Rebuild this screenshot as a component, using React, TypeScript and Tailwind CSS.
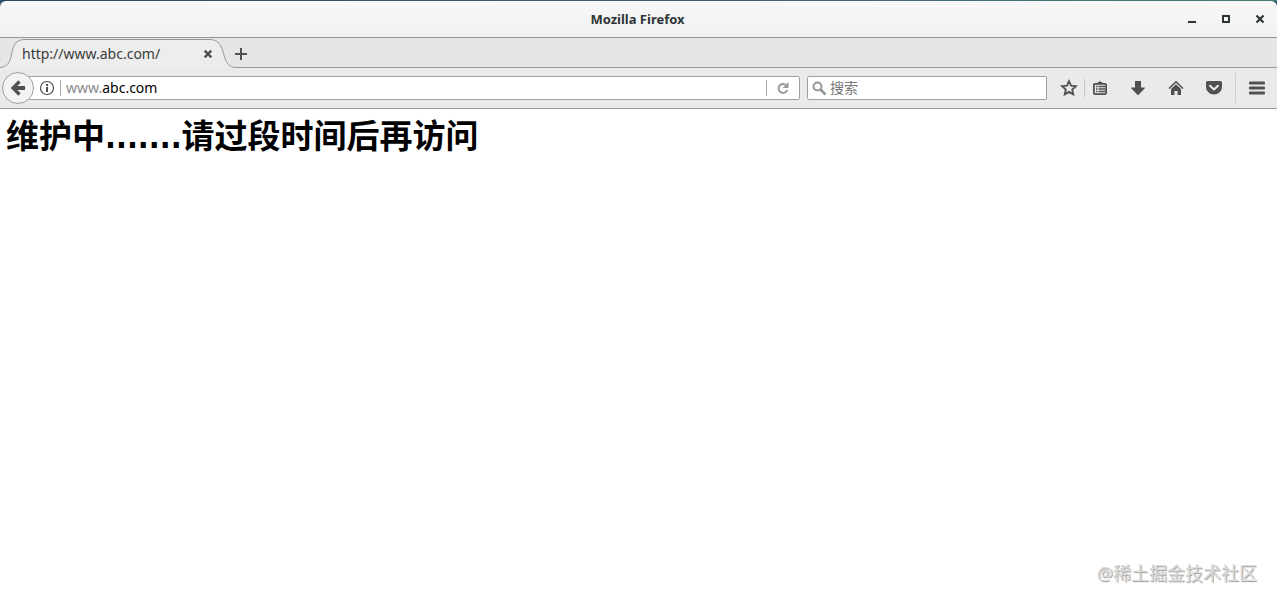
import type { ReactNode } from "react";

type IconButtonProps = {
  label: string;
  className?: string;
  children: ReactNode;
};

function IconButton({ label, className = "", children }: IconButtonProps) {
  return (
    <button
      type="button"
      aria-label={label}
      className={`flex h-8 shrink-0 items-center justify-center text-[#505050] ${className}`}
    >
      {children}
    </button>
  );
}

function TitleBar() {
  return (
    <div className="bg-[#35566b]">
      <div className="h-px bg-linear-to-r from-[#2f4766] to-[#4a7a78]" />
      <div className="flex h-[37px] items-center rounded-t-md border-b border-[#969696] bg-linear-to-b from-[#f8f8f8] to-[#f1f1f1] text-[#2e3436]">
        <div className="w-[100px]" />
        <h1 className="flex-1 pt-px text-center text-[13px] font-bold">
          Mozilla Firefox
        </h1>
        <div className="flex w-[102px] items-center">
          <IconButton label="Minimize" className="w-[34px]">
            <svg width="16" height="16" viewBox="0 0 16 16" fill="#2e3436">
              <path d="M4 10h8v2H4z" />
            </svg>
          </IconButton>
          <IconButton label="Maximize" className="w-[34px]">
            <svg width="16" height="16" viewBox="0 0 16 16" fill="none">
              <path d="M5 5h6v6H5z" stroke="#2e3436" strokeWidth="2" />
            </svg>
          </IconButton>
          <IconButton label="Close" className="w-[34px]">
            <svg width="16" height="16" viewBox="0 0 16 16" fill="none">
              <path d="M4.5 4.5l7 7M11.5 4.5l-7 7" stroke="#2e3436" strokeWidth="2.2" />
            </svg>
          </IconButton>
        </div>
      </div>
    </div>
  );
}

function TabStrip() {
  return (
    <div className="flex h-[30px] items-stretch bg-[#e6e6e6]">
      <div className="relative flex w-[230px] items-center pt-[2px] pr-[14px] pl-[22px]">
        <svg
          className="absolute top-0 left-0"
          width="240"
          height="30"
          viewBox="0 0 240 30"
          fill="none"
        >
          <path
            d="M0 29.5C6 29 9 26 11 19C13 9 14 1.5 25 1.5H209C219 1.5 221 7 224 17C226 25 229 29.5 236 29.5V30H0Z"
            fill="#ededed"
          />
          <path
            d="M0 29.5C6 29 9 26 11 19C13 9 14 1.5 25 1.5H209C219 1.5 221 7 224 17C226 25 229 29.5 236 29.5H240"
            stroke="#979797"
          />
        </svg>
        <a
          href="#page"
          className="relative flex-1 text-sm text-[#3b3b3b]"
        >
          http://www.abc.com/
        </a>
        <button
          type="button"
          aria-label="Close tab"
          className="relative flex h-4 w-4 items-center justify-center"
        >
          <svg width="10" height="10" viewBox="0 0 10 10" fill="none">
            <path d="M1.7 1.7l6.6 6.6M8.3 1.7l-6.6 6.6" stroke="#505050" strokeWidth="2.4" />
          </svg>
        </button>
      </div>
      <div className="flex flex-1 items-center border-b border-[#979797] pt-[2px]">
        <button
          type="button"
          aria-label="New tab"
          className="flex h-6 w-[22px] items-center justify-center"
        >
          <svg width="12" height="12" viewBox="0 0 12 12" fill="none">
            <path d="M6 0v12M0 6h12" stroke="#505050" strokeWidth="2" />
          </svg>
        </button>
      </div>
    </div>
  );
}

function AddressBar() {
  return (
    <div className="-ml-2 flex h-6 min-w-0 flex-1 items-center rounded-[2px] border border-[#a0a0a0] bg-white">
      <button
        type="button"
        aria-label="Site information"
        className="ml-3 flex w-4 justify-center"
      >
        <svg width="16" height="16" viewBox="0 0 16 16" fill="none">
          <circle cx="8" cy="8" r="6.5" stroke="#505050" strokeWidth="1.2" />
          <path d="M7 4h2v2H7zM7 7h2v5H7z" fill="#505050" />
        </svg>
      </button>
      <div className="mr-[5px] ml-[5px] h-4 w-px bg-[#a8a8a8]" />
      <label htmlFor="url" className="text-sm text-[#8a8a8a]">
        www.
      </label>
      <input
        id="url"
        type="text"
        defaultValue="abc.com"
        className="min-w-0 flex-1 bg-transparent text-sm text-black outline-none"
      />
      <div className="h-4 w-px bg-[#a8a8a8]" />
      <button
        type="button"
        aria-label="Reload"
        className="flex w-8 justify-center"
      >
        <svg width="14" height="14" viewBox="0 0 14 14" fill="none">
          <path d="M10.3 4.3A4.5 4.5 0 1 0 11.3 9" stroke="#9a9a9f" strokeWidth="2" />
          <path d="M12.5 1v6H6.8z" fill="#9a9a9f" />
        </svg>
      </button>
    </div>
  );
}

function SearchBox() {
  return (
    <div className="ml-[7px] flex h-6 w-60 items-center rounded-[2px] border border-[#a0a0a0] bg-white">
      <label htmlFor="search" aria-label="搜索" className="ml-1 w-[18px]">
        <svg width="15" height="15" viewBox="0 0 15 15" fill="none" stroke="#979797">
          <circle cx="5.5" cy="5.5" r="4" strokeWidth="2" />
          <path d="M8.5 8.5l5 5" strokeWidth="2.6" />
        </svg>
      </label>
      <input
        id="search"
        type="search"
        placeholder="搜索"
        className="min-w-0 flex-1 bg-transparent text-sm outline-none placeholder:text-[#777777]"
      />
    </div>
  );
}

function Toolbar() {
  return (
    <div className="flex h-[41px] items-center border-b border-[#979797] bg-[#eaeaea] pl-[2px]">
      <IconButton
        label="Back"
        className="z-10 w-8 rounded-full border border-[#a0a0a0] bg-[#f3f3f3]"
      >
        <svg width="16" height="16" viewBox="0 0 16 16" fill="none" stroke="currentColor">
          <path d="M9.5 1.5L3 8L9.5 14.5" strokeWidth="3.2" />
          <path d="M4 8h11" strokeWidth="4" />
        </svg>
      </IconButton>
      <AddressBar />
      <SearchBox />

      <IconButton label="Bookmark this page" className="ml-[7px] w-[30px]">
        <svg width="18" height="18" viewBox="0 0 18 18" fill="none">
          <path
            d="M9 2.2l2 4.500 4.900.5-3.700 3.300 1.100 4.900L9 12.900l-4.300 2.500 1.100-4.900-3.700-3.300 4.900-.5z"
            stroke="currentColor"
            strokeWidth="1.8"
          />
        </svg>
      </IconButton>
      <div className="h-[18px] w-px bg-[#c6c6c6]" />
      <IconButton label="Bookmarks" className="w-[30px]">
        <svg width="16" height="16" viewBox="0 0 16 16" fill="none">
          <path d="M4.500 3.500L6.500 2h.3a1.300 1.300 0 0 1 2.400 0h.3l2 1.500z" fill="currentColor" />
          <rect x="1.900" y="3.900" width="12.200" height="10.200" rx="1.200" stroke="currentColor" strokeWidth="1.800" />
          <path d="M4 6.500h1.500M4 9h1.500M4 11.500h1.500M6.500 6.500H13M6.500 9H13M6.500 11.500H13" stroke="currentColor" strokeWidth="1.300" />
        </svg>
      </IconButton>
      <IconButton label="Downloads" className="ml-1 w-[38px]">
        <svg width="16" height="16" viewBox="0 0 16 16" fill="currentColor">
          <path d="M5 1h6v6.500h3.500a.4.4 0 0 1 .3.700L8.600 14.700a.8.8 0 0 1-1.200 0L1.200 8.200a.4.4 0 0 1 .3-.7H5z" />
        </svg>
      </IconButton>
      <IconButton label="Home" className="w-[38px]">
        <svg width="16" height="16" viewBox="0 0 16 16" fill="none">
          <path d="M1 8.500L8 1.800l7 6.700" stroke="currentColor" strokeWidth="1.500" />
          <path d="M8 4.200l5 4.800V15H9.500v-4h-3v4H3V9z" fill="currentColor" />
        </svg>
      </IconButton>
      <IconButton label="Save to Pocket" className="w-[38px]">
        <svg width="16" height="16" viewBox="0 0 16 16" fill="none">
          <path d="M1.500 1h13a1.500 1.500 0 0 1 1.500 1.500v4.500a8 7.500 0 0 1-16 0V2.500a1.500 1.500 0 0 1 1.500-1.500z" fill="currentColor" />
          <path d="M4 5.800l4 3.700 4-3.700" stroke="#eaeaea" strokeWidth="2" strokeLinecap="round" strokeLinejoin="round" />
        </svg>
      </IconButton>
      <div className="ml-[2px] h-[30px] w-px bg-[#cfcfcf]" />
      <IconButton label="Menu" className="w-[41px]">
        <svg width="16" height="14" viewBox="0 0 16 14" fill="currentColor">
          <rect y="0.5" width="16" height="3" rx="1" />
          <rect y="5.5" width="16" height="3" rx="1" />
          <rect y="10.5" width="16" height="3" rx="1" />
        </svg>
      </IconButton>
    </div>
  );
}

export default function App() {
  return (
    <div className="flex min-h-screen flex-col bg-white font-['Noto_Sans','Noto_Sans_CJK_SC',sans-serif]">
      <header>
        <TitleBar />
        <TabStrip />
        <Toolbar />
      </header>
      <main id="page" className="relative flex-1 px-[6px] pt-1">
        <h2 className="font-['DejaVu_Sans_Condensed','Noto_Sans_CJK_SC',sans-serif] text-[33px] leading-[48px] font-bold text-black">
          维护中<span className="text-[32px]">.......</span>请过段时间后再访问
        </h2>
        <p className="absolute right-5 bottom-[18px] text-lg leading-6 text-[#dcdcdc] text-shadow-[1px_1px_1px_#999999]">
          @稀土掘金技术社区
        </p>
      </main>
    </div>
  );
}
